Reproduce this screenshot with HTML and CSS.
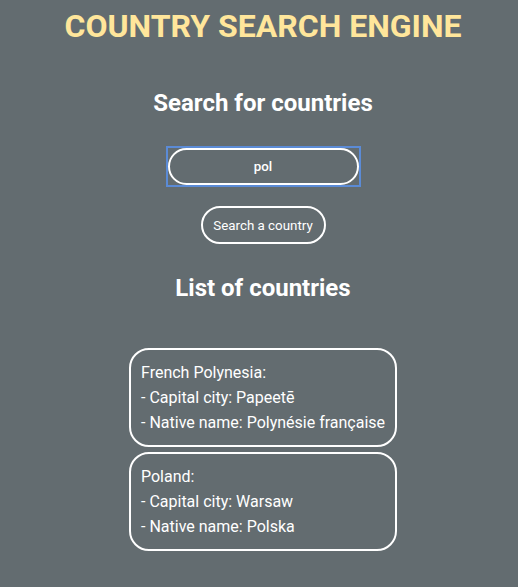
FILE: index.html
```html
<!DOCTYPE html>
<html lang="en">
<head>
<meta charset="utf-8">
<title>Country Search Engine</title>
<link rel="stylesheet" href="styles.css">
</head>
<body>
<main class="page">
  <h1 class="title">COUNTRY SEARCH ENGINE</h1>
  <h2 class="section-title search-title">Search for countries</h2>
  <div class="focus-ring"><input class="search-input" type="text" value="pol"></div>
  <button class="search-btn" type="button">Search a country</button>
  <h2 class="section-title list-title">List of countries</h2>
  <div class="country-list">
    <div class="country-card">
      <div>French Polynesia:</div>
      <div>- Capital city: Papeetē</div>
      <div>- Native name: Polynésie française</div>
    </div>
    <div class="country-card">
      <div>Poland:</div>
      <div>- Capital city: Warsaw</div>
      <div>- Native name: Polska</div>
    </div>
  </div>
</main>
</body>
</html>
```
FILE: styles.css
```css
html, body {
  margin: 0;
  padding: 0;
  background: #636c70;
}
body {
  padding-left: 8px;
  font-family: Roboto, "Liberation Sans", sans-serif;
  color: #ffffff;
}
.page {
  display: flex;
  flex-direction: column;
  align-items: center;
  text-align: center;
}
.title {
  margin: 7px 0 0;
  font-size: 32px;
  font-weight: 700;
  line-height: normal;
  color: #ffe69b;
}
.section-title {
  margin: 0;
  font-size: 24px;
  font-weight: 700;
  line-height: normal;
}
.search-title {
  margin-top: 44px;
}
.focus-ring {
  margin-top: 29px;
  border: 2px solid #5b8bd6;
  display: flex;
}
.search-input {
  box-sizing: border-box;
  width: 191px;
  height: 37px;
  margin: 0;
  padding: 0 10px;
  border: 2px solid #ffffff;
  border-radius: 19px;
  background: transparent;
  color: #ffffff;
  font-family: Roboto, "Liberation Sans", sans-serif;
  font-size: 13.33px;
  font-weight: 500;
  text-align: center;
  outline: none;
}
.search-btn {
  box-sizing: border-box;
  margin-top: 19px;
  width: 125px;
  height: 38px;
  padding: 0;
  border: 2px solid #ffffff;
  border-radius: 19px;
  background: transparent;
  color: #ffffff;
  font-family: Roboto, "Liberation Sans", sans-serif;
  font-size: 13.33px;
  font-weight: 400;
}
.list-title {
  margin-top: 30px;
}
.country-list {
  margin-top: 46px;
  display: flex;
  flex-direction: column;
  gap: 5px;
}
.country-card {
  box-sizing: border-box;
  width: 268px;
  padding: 10px 10px 10px;
  border: 2px solid #ffffff;
  border-radius: 20px;
  text-align: left;
  font-size: 16px;
  line-height: 25px;
  white-space: nowrap;
}
```
